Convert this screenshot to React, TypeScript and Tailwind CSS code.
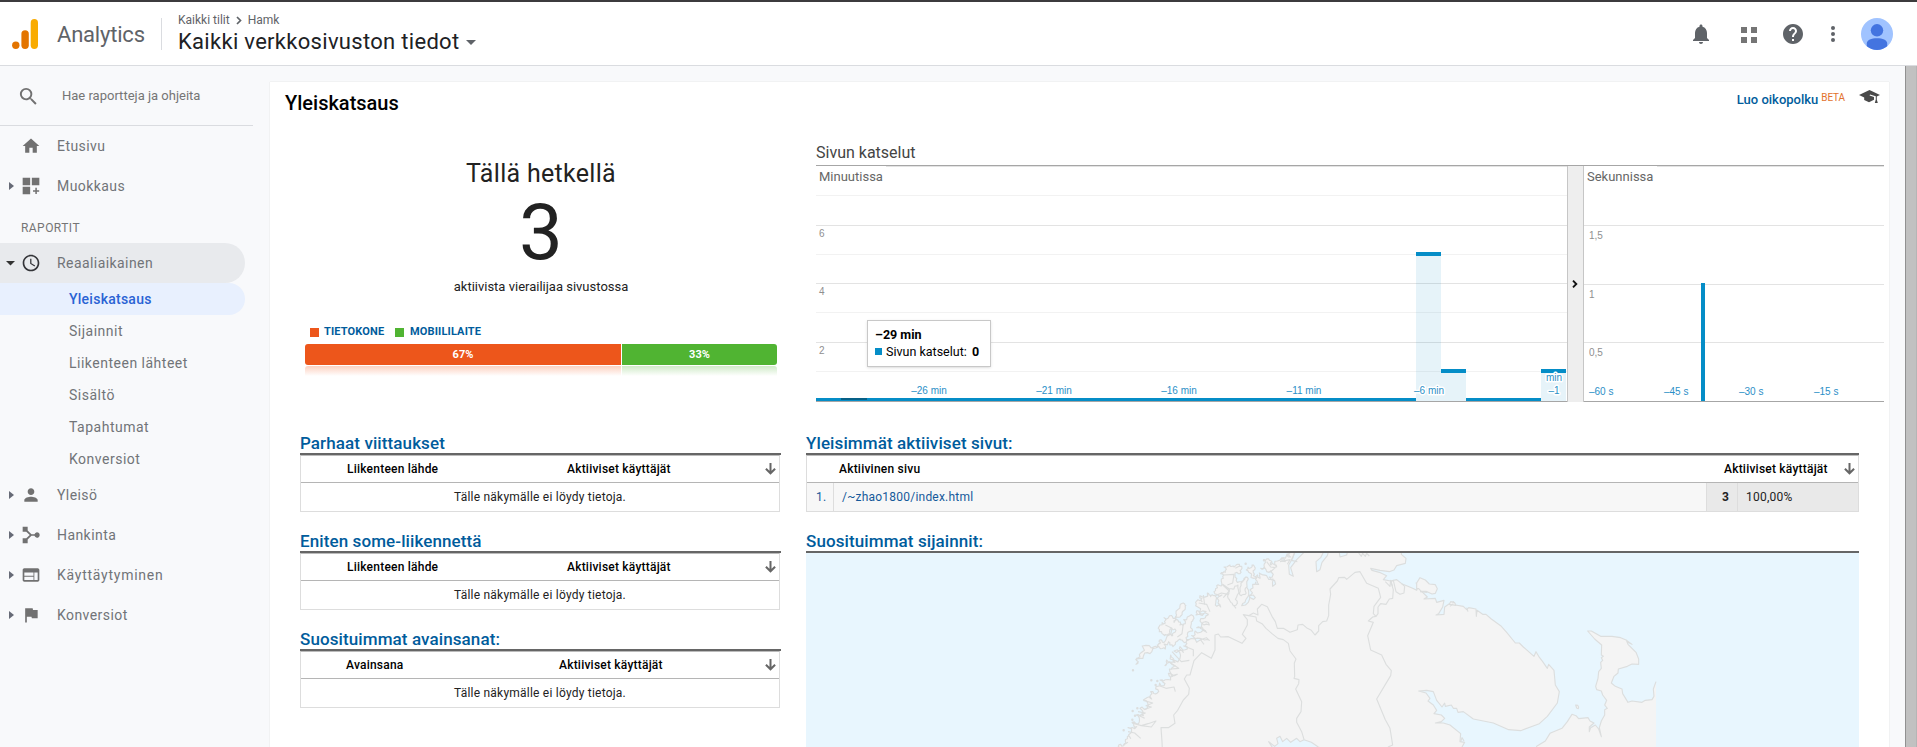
import type { ReactNode } from "react";

type Point = [number, number];

const ICONS = {
  search:
    "M15.5 14h-.79l-.28-.27A6.471 6.471 0 0 0 16 9.5 6.5 6.5 0 1 0 9.5 16c1.61 0 3.09-.59 4.23-1.57l.27.28v.79l5 4.99L20.49 19l-4.99-5zm-6 0C7.01 14 5 11.99 5 9.5S7.01 5 9.5 5 14 7.01 14 9.5 11.99 14 9.5 14z",
  home: "M10 20v-6h4v6h5v-8h3L12 3 2 12h3v8z",
  customize: "M2 2h9v9H2zM13 2h9v9h-9zM2 13h9v9H2zM17.200 14.200h1.800v2.800h2.800v1.800H19v2.800h-1.800v-2.800h-2.800V17h2.800z",
  clock:
    "M11.99 2C6.47 2 2 6.48 2 12s4.47 10 9.99 10C17.52 22 22 17.52 22 12S17.52 2 11.99 2zM12 20c-4.42 0-8-3.58-8-8s3.58-8 8-8 8 3.58 8 8-3.58 8-8 8zm.5-13H11v6l5.25 3.15.75-1.23-4.5-2.67z",
  person: "M12 12c2.21 0 4-1.79 4-4s-1.79-4-4-4-4 1.79-4 4 1.79 4 4 4zm0 2c-2.67 0-8 1.34-8 4v2h16v-2c0-2.66-5.33-4-8-4z",
  acquisition:
    "M2 2h6v4.6l4.6 4.4h3.6a3.2 3.2 0 1 1 0 2h-3.6L8 17.400V22H2v-6h4.300l4.200-4L6.300 8H2z",
  web: "M20 4H4c-1.100 0-2 .9-2 2v12c0 1.100.9 2 2 2h16c1.100 0 2-.9 2-2V6c0-1.100-.9-2-2-2zm-5 14H4v-4h11v4zm0-5H4V9h11v4zm5 5h-4V9h4v9z",
  flag: "M14.400 6L14 4H5v17h2v-7h5.600l.4 2h7V6z",
  bell: "M12 22c1.100 0 2-.9 2-2h-4c0 1.100.89 2 2 2zm6-6v-5c0-3.070-1.640-5.640-4.500-6.320V4c0-.83-.67-1.500-1.500-1.500s-1.500.67-1.500 1.500v.68C7.630 5.360 6 7.920 6 11v5l-2 2v1h16v-1l-2-2z",
  help: "M12 2C6.480 2 2 6.480 2 12s4.480 10 10 10 10-4.480 10-10S17.520 2 12 2zm1 17h-2v-2h2v2zm2.070-7.750l-.9.920C13.450 12.900 13 13.500 13 15h-2v-.5c0-1.100.45-2.100 1.170-2.830l1.240-1.260c.37-.36.590-.86.590-1.410 0-1.100-.9-2-2-2s-2 .9-2 2H8c0-2.210 1.790-4 4-4s4 1.790 4 4c0 .88-.36 1.680-.93 2.250z",
};

function Icon({ name, className }: { name: keyof typeof ICONS; className: string }) {
  return (
    <svg viewBox="0 0 24 24" fill="currentColor" className={className}>
      <path d={ICONS[name]} />
    </svg>
  );
}

function Header() {
  return (
    <header className="flex h-[66px] shrink-0 items-stretch border-t-2 border-b border-t-[#3c3b3d] border-b-[#dadce0] bg-white">
      <svg width="28" height="32" viewBox="0 0 28 32" className="mt-4 ml-3">
        <circle cx="3.800" cy="27.300" r="3.700" fill="#e37400" />
        <rect x="9.400" y="12.200" width="7.400" height="18.800" rx="3.700" fill="#e37400" />
        <rect x="18.700" y="1" width="7.300" height="30" rx="3.650" fill="#f9ab00" />
      </svg>
      <div className="ml-[17px] w-[104px] pt-[17px] text-[22px] leading-8 tracking-[-0.2px] text-[#5f6368]">Analytics</div>
      <div className="mt-4 h-8 w-px bg-[#dadce0]" />
      <div className="ml-[16px] flex-1 pt-[10px]">
        <div className="flex items-center gap-[6px] text-[12px] leading-4 text-[#5f6368]">
          <span>Kaikki tilit</span>
          <svg width="6" height="9" viewBox="0 0 6 9" fill="none" stroke="#5f6368" strokeWidth="1.700">
            <path d="M1 1l3.500 3.500L1 8" />
          </svg>
          <span>Hamk</span>
        </div>
        <div className="flex items-center gap-[7px] text-[22px] leading-7 tracking-[0.3px] text-[#202124]">
          <span>Kaikki verkkosivuston tiedot</span>
          <svg width="10" height="5" viewBox="0 0 10 5" fill="#5f6368">
            <path d="M0 0h10L5 5z" />
          </svg>
        </div>
      </div>
      <div className="flex text-[#5f6368]">
        <Icon name="bell" className="mt-[20px] h-6 w-6" />
        <div className="mt-[25px] ml-[28px] grid h-4 w-4 grid-cols-2 gap-1">
          <i className="bg-[#757575]" />
          <i className="bg-[#757575]" />
          <i className="bg-[#757575]" />
          <i className="bg-[#757575]" />
        </div>
        <Icon name="help" className="mt-[20px] ml-[24px] h-6 w-6" />
        <div className="mt-6 ml-[26px] flex w-1 flex-col gap-[2px]">
          <i className="h-1 w-1 rounded-full bg-[#5f6368]" />
          <i className="h-1 w-1 rounded-full bg-[#5f6368]" />
          <i className="h-1 w-1 rounded-full bg-[#5f6368]" />
        </div>
        <svg width="32" height="32" viewBox="0 0 32 32" className="mt-4 mr-6 ml-[26px]">
          <circle cx="16" cy="16" r="16" fill="#a0c3ff" />
          <circle cx="16" cy="12.300" r="6.200" fill="#4374e0" />
          <path d="M5.800 25.500c0-3.500 4.600-5.200 10.200-5.200s10.200 1.700 10.200 5.200v2.800A16 16 0 0 1 16 32a16 16 0 0 1-10.200-3.700z" fill="#4374e0" />
        </svg>
      </div>
    </header>
  );
}

interface NavItemProps {
  icon: keyof typeof ICONS;
  label: string;
  arrow?: boolean;
  open?: boolean;
  wide?: boolean;
}

function NavItem({ icon, label, arrow = true, open = false, wide = false }: NavItemProps) {
  return (
    <div className={open ? "flex h-10 w-[245px] items-center rounded-r-full bg-[#e8eaed]" : "flex h-10 items-center"}>
      <div className={open ? "flex w-[21px] justify-end pr-[6px]" : "flex w-[21px] justify-end pr-[5px]"}>
        {arrow && open && (
          <svg width="9" height="5" viewBox="0 0 9 5" fill="#333">
            <path d="M0 0h9L4.500 4.500z" />
          </svg>
        )}
        {arrow && !open && (
          <svg width="7" height="8" viewBox="0 0 7 8" fill="#666a76">
            <path d="M0 0l5 4-5 4z" />
          </svg>
        )}
      </div>
      <Icon name={icon} className={open ? "h-5 w-5 text-[#333438]" : "h-5 w-5 text-[#717171]"} />
      <span className={wide ? "ml-4 text-[14px] tracking-[0.75px] text-[#717478]" : "ml-4 text-[14px] tracking-[0.43px] text-[#717478]"}>{label}</span>
    </div>
  );
}

const SUB_ITEMS = ["Sijainnit", "Liikenteen lähteet", "Sisältö", "Tapahtumat", "Konversiot"];

function Sidebar() {
  return (
    <aside className="w-[270px] shrink-0">
      <div className="flex h-[60px] w-[253px] items-center border-b border-[#dadce0]">
        <Icon name="search" className="mt-[2px] ml-[17px] h-[23px] w-[23px] text-[#717171]" />
        <span className="ml-[22px] text-[13px] text-[#757575]">Hae raportteja ja ohjeita</span>
      </div>
      <NavItem icon="home" label="Etusivu" arrow={false} />
      <NavItem icon="customize" label="Muokkaus" />
      <div className="h-[37px] pt-[14px] pl-[21px] text-[12px] leading-4 tracking-[0.45px] text-[#757575]">RAPORTIT</div>
      <NavItem icon="clock" label="Reaaliaikainen" open />
      <div className="flex h-8 w-[245px] items-center rounded-r-full bg-[#e8f0fe] pl-[69px] text-[14px] font-medium tracking-[0.25px] text-[#2a63d4]">
        Yleiskatsaus
      </div>
      {SUB_ITEMS.map((s) => (
        <div key={s} className="flex h-8 items-center pl-[69px] text-[14px] tracking-[0.5px] text-[#717478]">
          {s}
        </div>
      ))}
      <NavItem icon="person" label="Yleisö" />
      <NavItem icon="acquisition" label="Hankinta" />
      <NavItem icon="web" label="Käyttäytyminen" wide />
      <NavItem icon="flag" label="Konversiot" />
    </aside>
  );
}

function ActiveUsers() {
  return (
    <section className="flex w-[472px] flex-col">
      <div className="text-center text-[#222]">
        <div className="text-[25px] leading-[30px] tracking-[0.3px]">Tällä hetkellä</div>
        <div className="mt-[4px] text-[78px] leading-[80px]">3</div>
        <div className="mt-[6px] text-[13px] leading-4">aktiivista vierailijaa sivustossa</div>
      </div>
      <div className="mt-[29px] flex h-4 items-center pl-[5px] text-[11px] font-bold tracking-[0.15px] text-[#005c9c]">
        <i className="mr-[5px] h-[9px] w-[9px] bg-[#ed561b]" />
        <span className="w-[71px]">TIETOKONE</span>
        <i className="mr-[6px] h-[9px] w-[9px] bg-[#50b432]" />
        <span>MOBIILILAITE</span>
      </div>
      <div className="mt-1 flex h-[21px] gap-px text-center text-[11px] leading-[21px] font-bold text-white">
        <div className="w-[316px] rounded-l-[3px] bg-[#ed561b]">67%</div>
        <div className="flex-1 rounded-r-[3px] bg-[#50b432]">33%</div>
      </div>
      <div className="mt-px flex h-[10px] gap-px">
        <div className="w-[316px] rounded-tl-[3px] bg-gradient-to-b from-[#fbd0c0] to-white" />
        <div className="flex-1 rounded-tr-[3px] bg-gradient-to-b from-[#cfeac7] to-white" />
      </div>
    </section>
  );
}

const MINUTE_LABELS = [
  { x: 113, text: "–26 min" },
  { x: 238, text: "–21 min" },
  { x: 363, text: "–16 min" },
  { x: 488, text: "–11 min" },
  { x: 613, text: "–6 min" },
];

function MinuteChart() {
  return (
    <svg width="751" height="237" viewBox="0 0 751 237" className="block font-['Liberation_Sans',Arial,sans-serif] text-[10px]" shapeRendering="crispEdges">
      <rect x="70" y="1" width="681" height="1" fill="#e3e3e3" />
      {[30, 89, 147, 206].map((y) => (
        <rect key={y} y={y} width="751" height="1" fill="#f2f2f2" />
      ))}
      {[60, 118, 177].map((y) => (
        <rect key={y} y={y} width="751" height="1" fill="#e3e3e3" />
      ))}
      <g fill="#058dc7">
        <path d="M600 91h25v117h25v28h-50zM725 208h25v28h-25z" fillOpacity=".1" />
        <path d="M600 87h25v4h-25zM625 204h25v4h-25zM725 204h25v4h-25zM0 233h600v3H0zM650 233h75v3h-75z" />
      </g>
      <rect x="25" y="233" width="26" height="2" fill="#066087" />
      <rect y="236" width="751" height="1" fill="#a6a6a6" />
      <g fill="#8f8f8f">
        <text x="3" y="72">6</text>
        <text x="3" y="130">4</text>
        <text x="3" y="189">2</text>
      </g>
      <g fill="#2b8fc7" textAnchor="middle" stroke="#fff" strokeWidth="3" paintOrder="stroke" strokeLinejoin="round">
        {MINUTE_LABELS.map((l) => (
          <text key={l.x} x={l.x} y="229">
            {l.text}
          </text>
        ))}
        <text x="738" y="216">min</text>
        <text x="738" y="229">–1</text>
      </g>
    </svg>
  );
}

function SecondChart() {
  return (
    <svg width="300" height="237" viewBox="0 0 300 237" className="block font-['Liberation_Sans',Arial,sans-serif] text-[10px]" shapeRendering="crispEdges">
      <rect x="73" y="1" width="227" height="1" fill="#e3e3e3" />
      {[60, 119, 177].map((y) => (
        <rect key={y} y={y} width="300" height="1" fill="#e3e3e3" />
      ))}
      <rect x="117" y="118" width="4" height="118" fill="#058dc7" />
      <rect y="236" width="300" height="1" fill="#a6a6a6" />
      <g fill="#8f8f8f">
        <text x="5" y="74">1,5</text>
        <text x="5" y="133">1</text>
        <text x="5" y="191">0,5</text>
      </g>
      <g fill="#2b8fc7">
        <text x="5" y="230">–60 s</text>
        <text x="80" y="230">–45 s</text>
        <text x="155" y="230">–30 s</text>
        <text x="230" y="230">–15 s</text>
      </g>
    </svg>
  );
}

function PageViews() {
  return (
    <section className="w-[1068px]">
      <h2 className="h-[23px] text-[16px] leading-[21px] text-[#444]">Sivun katselut</h2>
      <div className="relative flex border-t border-[#a6a6a6]">
        <div className="-mt-px">
          <MinuteChart />
        </div>
        <div className="flex w-[17px] items-center justify-center border-x border-[#c6c6c6] bg-[#eee]">
          <svg width="6" height="8" viewBox="0 0 6 8" fill="none" stroke="#111" strokeWidth="1.900" className="-mt-px mr-px">
            <path d="M1 .7L4.300 4 1 7.300" />
          </svg>
        </div>
        <div className="-mt-px">
          <SecondChart />
        </div>
        <span className="absolute top-[2px] left-[3px] text-[13px] leading-[18px] text-[#666]">Minuutissa</span>
        <span className="absolute top-[2px] left-[771px] text-[13px] leading-[18px] text-[#666]">Sekunnissa</span>
        <div className="absolute top-[154px] left-[51px] h-[47px] w-[124px] border border-[#c8c8c8] bg-white pt-[5px] pl-[7px] text-[12.500px] leading-[17px] whitespace-nowrap text-black shadow-sm">
          <div className="font-bold">–29 min</div>
          <div className="flex items-center">
            <i className="mr-1 h-[7px] w-[7px] bg-[#058dc7]" />
            <span>
              Sivun katselut: <b className="ml-[2px] font-bold">0</b>
            </span>
          </div>
        </div>
      </div>
    </section>
  );
}

function SortArrow() {
  return (
    <svg width="11" height="12" viewBox="0 0 11 12" fill="none" stroke="#666" strokeWidth="2">
      <path d="M5.500 0v10M.9 5.700l4.600 4.600 4.600-4.600" />
    </svg>
  );
}

function Panel({ title, children }: { title: string; children: ReactNode }) {
  return (
    <section>
      <h3 className="h-[22px] border-b-2 border-[#666] text-[17px] leading-[20px] font-medium tracking-[0.1px] text-[#005c9c]">{title}</h3>
      {children}
    </section>
  );
}

const TABLE_FRAME = "h-[57px] border border-t-[#bbb] border-r-[#ddd] border-b-[#ddd] border-l-[#ddd] text-[12px] tracking-[0.22px]";

function EmptyTable({ title, first, narrow = false }: { title: string; first: string; narrow?: boolean }) {
  return (
    <Panel title={title}>
      <div className={TABLE_FRAME + " mr-px"}>
        <div className={narrow ? "flex h-[27px] items-center border-b border-[#b5b5b5] pr-[3px] pl-[45px] font-medium text-black" : "flex h-[27px] items-center border-b border-[#b5b5b5] pr-[3px] pl-[46px] font-medium text-black"}>
          <span className={narrow ? "w-[213px]" : "w-[220px]"}>{first}</span>
          <span className="flex-1">Aktiiviset käyttäjät</span>
          <SortArrow />
        </div>
        <div className="h-7 text-center leading-7 text-[#222]">Tälle näkymälle ei löydy tietoja.</div>
      </div>
    </Panel>
  );
}

function ActivePages() {
  return (
    <Panel title="Yleisimmät aktiiviset sivut:">
      <div className={TABLE_FRAME}>
        <div className="flex h-[27px] items-center border-b border-[#b5b5b5] pr-[3px] pl-[32px] font-medium text-black">
          <span className="flex-1">Aktiivinen sivu</span>
          <span className="w-[120px]">Aktiiviset käyttäjät</span>
          <SortArrow />
        </div>
        <div className="flex h-7 items-center bg-[#f7f7f7] leading-7">
          <span className="h-full w-[27px] border-r border-[#ddd] pl-[9px] text-[#15599a]">1.</span>
          <span className="flex-1 pl-[8px] text-[#15599a]">/~zhao1800/index.html</span>
          <span className="h-full w-[31px] border-l border-[#ddd] bg-[#e9e9e9] pl-[15px] font-bold text-[#222]">3</span>
          <span className="h-full w-[121px] border-l border-[#ddd] bg-[#e9e9e9] pl-[8px] text-[#222]">100,00%</span>
        </div>
      </div>
    </Panel>
  );
}

/* Small deterministic generator, so that the coast is drawn alike on every render. */
function makeRandom(seed: number) {
  let s = seed;
  return () => {
    s = (s * 16807) % 2147483647;
    return s / 2147483647 - 0.5;
  };
}

function roughen(points: Point[], amount: number, depth: number, seed = 7): Point[] {
  const rnd = makeRandom(seed);
  let pts = points;
  for (let d = 0; d < depth; d++) {
    const next: Point[] = [];
    for (let i = 0; i < pts.length - 1; i++) {
      const [x1, y1] = pts[i];
      const [x2, y2] = pts[i + 1];
      const k = rnd() * amount;
      next.push(pts[i], [(x1 + x2) / 2 - (y2 - y1) * k, (y1 + y2) / 2 + (x2 - x1) * k]);
    }
    next.push(pts[pts.length - 1]);
    pts = next;
  }
  return pts;
}

const toPath = (pts: Point[]) => "M" + pts.map(([x, y]) => x.toFixed(1) + " " + y.toFixed(1)).join("L");

function parse(text: string): Point[] {
  return text.split(" ").map((p) => p.split(",").map(Number) as Point);
}

const NORWAY_COAST = parse(
  "60,612 62,598 78,594 82,575 92,580 84,548 110,545 96,532 118,530 108,510 130,512 120,490 142,488 130,465 155,462 152,440 172,444 168,425 192,422 180,405 212,405 205,385 232,388 208,372 225,362 195,362 200,345 225,352 212,330 240,340 222,318 250,322 240,305 262,312 256,290 290,292 328,286 300,280 275,272 285,258 320,262 290,248 305,238 328,240 300,228 318,212 325,208 288,210 296,198 318,200 292,185 290,168 306,170 300,152 322,144 332,155 345,152 346,180 362,186 352,160 366,150 342,140 350,122 366,118 370,100 362,86 376,82 372,66 390,60 402,66 412,58 426,70 420,86 405,90 412,112 432,100 442,98 436,125 446,140 440,160 425,182 448,150 466,158 450,135 458,118 476,118 470,98 446,82 444,66 456,60 464,74 460,92 480,100 478,84 500,92 518,124 508,96 520,88 500,80 482,70 492,62 492,44 508,46 512,60 530,66 532,48 556,50 548,38 572,36 560,28 586,14",
);

const NORTH_COAST =
  "586,14 578,40 566,60 568,88 580,94 572,68 590,44 610,24 616,10 676,10 662,38 648,50 650,80 660,74 666,52 682,32 688,10 716,10 720,36 740,30 745,10 905,10 904,28 918,40 916,55 890,62 882,75 868,80 840,76 812,70 816,76 838,82 860,92 850,104 872,108 890,104 905,116 920,122 938,130 950,136 955,118 948,114 958,126 968,142 982,156 972,162 1006,160 1010,172 1032,166 1028,186 1016,206 1008,210 1032,208 1034,186 1048,176 1060,170 1066,180 1090,184 1100,194 1106,188 1128,192 1129,214 1131,196 1148,208 1158,208 1174,222 1202,242 1220,262 1246,294 1258,294 1270,306 1302,334 1308,320 1316,334 1328,350 1342,370 1346,358 1362,376 1366,420 1378,440 1372,474 1342,514 1318,536 1262,557 1226,554 1180,534 1120,522 1090,500 1074,502 1070,490 1060,490 1054,480 1036,484 1034,474 1026,486 1010,466 1000,440 980,436 956,438 978,444 990,460 984,468 1000,480 1010,496 1002,506 1024,510 1034,520 1024,530 1006,534 1030,534 1050,540 1082,566 1080,590 1094,592 1086,606 1086,620 690,620 655,606 634,592 612,584 600,590 590,580 572,592 560,580 548,590 540,574 530,580 534,596 524,604 506,590 520,612 60,612";

const WHITE_SEA =
  "1305,620 1310,604 1336,588 1350,565 1386,550 1402,530 1416,508 1428,512 1436,521 1464,518 1470,528 1482,534 1468,546 1468,560 1472,548 1486,540 1496,552 1504,575 1498,548 1504,528 1514,510 1514,494 1522,490 1514,480 1520,466 1508,450 1504,438 1490,434 1487,424 1494,400 1496,380 1504,370 1502,352 1508,346 1504,338 1510,334 1504,330 1505,300 1484,282 1463,258 1474,258 1502,274 1536,274 1562,278 1580,286 1596,298 1588,294 1580,288 1584,298 1608,322 1616,342 1616,358 1596,357 1582,364 1555,372 1554,384 1542,394 1534,414 1546,424 1566,432 1568,446 1584,472 1596,468 1626,472 1636,466 1656,464 1662,454 1660,432 1668,410 1668,620z";

const ISLANDS = [
  "240,182 254,176 256,188 246,204 240,216 226,218 228,206 240,182",
  "216,212 222,232 234,226 240,240 256,236 262,216 282,220 274,236 278,258 262,268 266,284 250,290 240,282 226,298 210,300 206,290 196,312 178,308 172,300 158,312 134,324 122,340 108,358 110,340 122,324 148,302 160,306 176,296 178,286 192,292 208,270 218,272 228,256 214,250 204,268 194,272 178,260 180,240 196,234 192,218 216,212",
  "402,132 414,120 412,150 412,176 402,182 390,168 384,150 388,132 402,132",
  "438,96 444,104 436,130 438,146 424,152 420,134 428,110 438,96",
];

const SMALL_ISLANDS: Point[] = [
  [99, 376],
  [154, 406],
  [172, 408],
  [167, 420],
  [98, 498],
  [97, 524],
  [71, 556],
  [437, 56],
  [492, 46],
  [112, 490],
  [105, 512],
];

const BORDERS = [
  "187,612 186,590 183,548 205,548 225,535 221,510 233,496 250,465 266,448 268,430 253,402 260,390 270,390 282,347 305,323 334,340 345,315 345,270 355,267 362,276 385,275 426,295 438,280 427,268 442,240 442,224 430,209 446,212 460,204 474,210 472,192 485,178 502,185 516,214 526,230 532,250 550,250 570,262 592,254 594,240 608,238 622,250 634,256 645,270 656,258 656,242 668,230 680,228 686,212 686,180 692,148 690,132 712,108 716,98 734,97 740,103 765,82 780,80 800,115 835,130 842,157 822,184 820,206 828,214 818,216 805,228 820,232 803,272 812,315 845,330 858,358 874,377 872,392 830,462 856,524 870,550 878,600 864,606",
  "446,212 468,216 470,228 486,236 498,250 516,266 534,280 550,284 565,295 570,318 588,342 583,354 584,394 582,400 597,404 596,416 587,432 605,470 603,500 590,520 590,532 605,560 612,583",
  "828,214 834,206 834,186 842,176 858,178 868,162 878,160 880,134 872,110 880,106 888,140 900,148 912,144 914,124 905,116",
];

const MARKS =
  "M300 282l12 16M420 62l-14 8M402 182l6 8M346 152l18-8 20 4M366 118l22 20-18 20M372 90l30-2-4 26-16 6M388 132l-20-14M330 200l-10-22-24-4M310 150l4 30M196 240l20 10-4 20M250 236l-4 30-14 10M178 422l20 8 24-4 4 14M130 466l28 8-20 8 16 4-22 8M114 500l22 4-18 8 16 8M96 534l28 8 20-6 24-8-14 18-30-4M84 560l20 4 18 16M70 600l14-8M206 350l30 20-22 2M216 320l28 30 24-4M250 302l30 12 0 20M300 250l18 8M960 140l22 2M1060 176l-10 8M1100 188l4 12M776 24l8 10 4-9 8 9 4-9 8 8M584 24l-10 22 18 4M540 50l30-6-8 14M500 50l12 16 14 2-16 14M856 110l14 14 2-18 6 18M1082 590l4-12 6 10";

function LocationMap() {
  const coast = roughen(NORWAY_COAST, 0.9, 2);
  return (
    <svg width="1053" height="194" viewBox="0 0 1053 194" className="block bg-[#e8f6fe]">
      <g transform="translate(294 -8) scale(.33333)" fill="#f4f4f4" stroke="#dcdede" strokeWidth="3.400" strokeLinejoin="round">
        <path d={toPath(coast) + "L" + NORTH_COAST} />
        <path d={"M" + WHITE_SEA} stroke="none" />
        <path d={"M" + WHITE_SEA.replace(" 1668,620z", "")} fill="none" />
        {ISLANDS.map((island, i) => (
          <path key={island} d={toPath(roughen(parse(island), i === 1 ? 0.9 : 0.5, 2, 31 + i))} />
        ))}
        {SMALL_ISLANDS.map(([x, y]) => (
          <circle key={x + "-" + y} cx={x} cy={y} r="2" />
        ))}
        <path d="M950 114l10-16 16 7 12 12 18 2 6 12-6 14-10 2-18-8-14 0-8-8-6 0z" />
        <path d="M1048 178l4-8 12 3 4 8zM1427 480l6 1 3 5-1 5-5-2z" />
        <path d={MARKS} fill="none" />
        {BORDERS.map((border) => (
          <path key={border} d={"M" + border} fill="none" />
        ))}
      </g>
    </svg>
  );
}

export default function App() {
  return (
    <div className="flex h-[747px] w-full flex-col overflow-hidden bg-[#f8f9fb] font-[Roboto,sans-serif]">
      <Header />
      <div className="flex min-h-0 flex-1">
        <Sidebar />
        <main className="mt-4 mr-4 min-w-0 flex-1 overflow-hidden bg-white shadow-[0_0_1px_#ccc]">
          <div className="flex h-[60px] justify-between pr-[9px] pl-[15px]">
            <h1 className="pt-[9px] text-[20px] leading-6 font-medium text-black">Yleiskatsaus</h1>
            <div className="flex pt-[9px]">
              <span className="pt-px text-[13px] leading-4 font-medium text-[#005c9c]">Luo oikopolku</span>
              <span className="ml-[3px] text-[10px] leading-[13px] tracking-[-0.1px] text-[#e2722c]">BETA</span>
              <svg width="21" height="14" viewBox="0 0 21 14" className="-mt-px ml-[14px]" fill="#4a4a4a">
                <path d="M0 5L10.500 0 21 5l-3.200 1.600v3l1 3.400h-3l1-3.400V6.300L11 4.600l-.4.900 4.400 1.600v2.600L10 12.300 5.200 10V7.500z" />
              </svg>
            </div>
          </div>
          <div className="flex h-[288px] justify-between pr-[5px] pl-[35px]">
            <div className="pt-[17px]">
              <ActiveUsers />
            </div>
            <PageViews />
          </div>
          <div className="flex gap-[25px] pt-[3px] pl-[30px]">
            <div className="flex w-[481px] flex-col gap-[19px]">
              <EmptyTable title="Parhaat viittaukset" first="Liikenteen lähde" />
              <EmptyTable title="Eniten some-liikennettä" first="Liikenteen lähde" />
              <EmptyTable title="Suosituimmat avainsanat:" first="Avainsana" narrow />
            </div>
            <div className="flex w-[1053px] flex-col gap-[19px]">
              <ActivePages />
              <Panel title="Suosituimmat sijainnit:">
                <LocationMap />
              </Panel>
            </div>
          </div>
        </main>
        <div className="w-3 shrink-0 border-r border-l border-r-[#b5b5b5] border-l-[#919191] bg-[#c1c1c1]" />
      </div>
    </div>
  );
}
